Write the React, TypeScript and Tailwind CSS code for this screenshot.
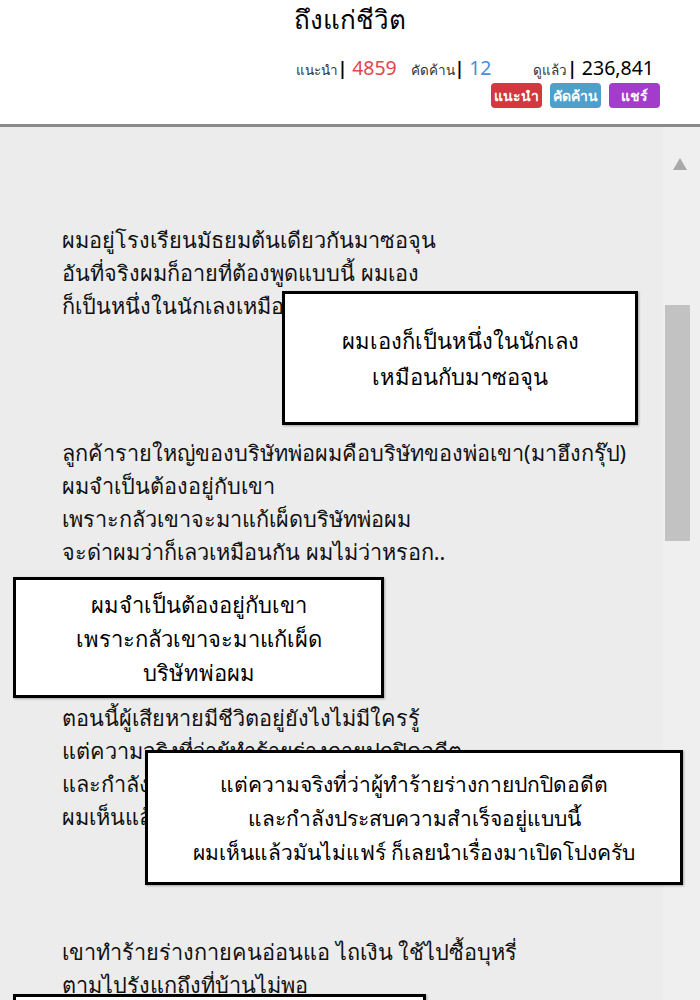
const font = { fontFamily: '"Noto Sans", "DejaVu Sans", sans-serif' };

const Stat = ({ label, value, color }: { label: string; value: string; color: string }) => (
  <div className="flex items-baseline">
    <span className="text-[13.5px] text-[#333]">
      {label}
      <span className="text-[17px] font-bold text-black">|</span>
    </span>
    <span className={`ml-[5px] text-[19.5px] ${color}`}>{value}</span>
  </div>
);

const Box = ({ className, lines }: { className: string; lines: string[] }) => (
  <div
    className={`absolute flex flex-col items-center justify-center border-[3px] border-black bg-white text-[21px] leading-[34px] text-black shadow-[1px_1px_2px_rgba(0,0,0,0.3)] ${className}`}
  >
    {lines.map((l) => (
      <div key={l}>{l}</div>
    ))}
  </div>
);

export default function App() {
  return (
    <div className="h-[1000px] w-[700px] overflow-hidden bg-[#ececec]" style={font}>
      {/* Header */}
      <header className="h-[127px] border-b-[3px] border-[#8a8a8a] bg-white">
        <h1 className="pt-[1px] text-center text-[26px] leading-[36px] text-black">ถึงแก่ชีวิต</h1>
        <div className="mt-[16px] flex justify-end gap-[14px] pr-[46px]">
          <Stat label="แนะนำ" value="4859" color="text-[#e0474c]" />
          <Stat label="คัดค้าน" value="12" color="text-[#4a8fd8]" />
          <div className="ml-[28px]">
            <Stat label="ดูแล้ว" value="236,841" color="text-black" />
          </div>
        </div>
        <div className="mt-[1px] flex justify-end gap-[8px] pr-[40px] text-[14px] font-semibold text-white">
          <button className="h-[25px] w-[51px] rounded-[4px] bg-[#d2383d]">แนะนำ</button>
          <button className="h-[25px] w-[51px] rounded-[4px] bg-[#4e9fcb]">คัดค้าน</button>
          <button className="h-[25px] w-[51px] rounded-[4px] bg-[#a43ccb]">แชร์</button>
        </div>
      </header>

      {/* Body */}
      <div className="relative flex h-[873px]">
        <div className="flex-1 pl-[62px] pt-[96px] text-[21.7px] leading-[33px] text-[#111]">
          <p>
            ผมอยู่โรงเรียนมัธยมต้นเดียวกันมาซอจุน
            <br />
            อันที่จริงผมก็อายที่ต้องพูดแบบนี้ ผมเอง
            <br />
            ก็เป็นหนึ่งในนักเลงเหมือนกับมาซอจุน
          </p>
          <p className="mt-[114px]">
            ลูกค้ารายใหญ่ของบริษัทพ่อผมคือบริษัทของพ่อเขา(มาฮึงกรุ๊ป)
            <br />
            ผมจำเป็นต้องอยู่กับเขา
            <br />
            เพราะกลัวเขาจะมาแก้เผ็ดบริษัทพ่อผม
            <br />
            จะด่าผมว่าก็เลวเหมือนกัน ผมไม่ว่าหรอก..
          </p>
          <p className="mt-[133px]">
            ตอนนี้ผู้เสียหายมีชีวิตอยู่ยังไงไม่มีใครรู้
            <br />
            แต่ความจริงที่ว่าผู้ทำร้ายร่างกายปกปิดอดีต
            <br />
            และกำลังประสบความสำเร็จอยู่แบบนี้
            <br />
            ผมเห็นแล้วมันไม่แฟร์ ก็เลยนำเรื่องมาเปิดโปงครับ
          </p>
          <p className="mt-[102px]">
            เขาทำร้ายร่างกายคนอ่อนแอ ไถเงิน ใช้ไปซื้อบุหรี่
            <br />
            ตามไปรังแกถึงที่บ้านไม่พอ
          </p>
        </div>

        {/* Scrollbar */}
        <div className="flex w-[37px] flex-col items-center bg-[#efefef]">
          <svg width="14" height="12" viewBox="0 0 14 12" className="mt-[31px] mr-[4px]">
            <polygon points="7,0 14,12 0,12" fill="#a9a9a9" />
          </svg>
          <div className="mt-[135px] mr-[8px] h-[236px] w-[25px] bg-[#c2c2c2]" />
        </div>

        {/* Caption boxes */}
        <Box
          className="left-[282px] top-[164px] h-[134px] w-[356px] text-[22px] leading-[36px]"
          lines={["ผมเองก็เป็นหนึ่งในนักเลง", "เหมือนกับมาซอจุน"]}
        />
        <Box
          className="left-[13px] top-[450px] h-[121px] w-[371px] text-[22px]"
          lines={["ผมจำเป็นต้องอยู่กับเขา", "เพราะกลัวเขาจะมาแก้เผ็ด", "บริษัทพ่อผม"]}
        />
        <Box
          className="left-[145px] top-[623px] h-[135px] w-[538px]"
          lines={[
            "แต่ความจริงที่ว่าผู้ทำร้ายร่างกายปกปิดอดีต",
            "และกำลังประสบความสำเร็จอยู่แบบนี้",
            "ผมเห็นแล้วมันไม่แฟร์ ก็เลยนำเรื่องมาเปิดโปงครับ",
          ]}
        />
        <Box className="left-[13px] top-[867px] h-[60px] w-[413px]" lines={[]} />
      </div>
    </div>
  );
}
